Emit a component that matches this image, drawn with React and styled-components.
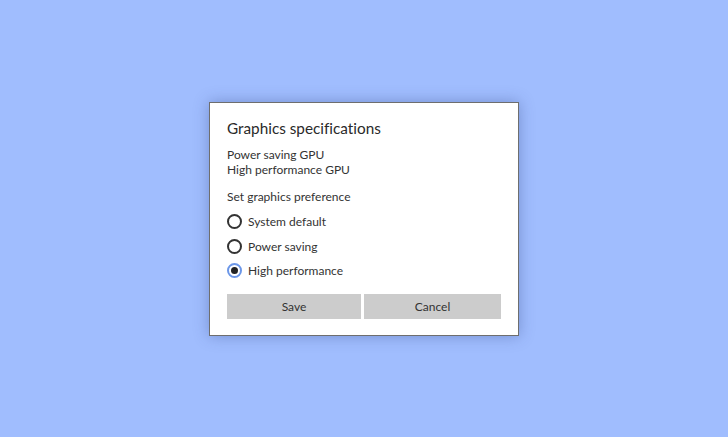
import React, { useState } from 'react';
import styled, { createGlobalStyle } from 'styled-components';

const GlobalStyle = createGlobalStyle`
  html, body {
    margin: 0;
    height: 100%;
    background: #a0bdfe;
  }
  #root {
    height: 100%;
  }
`;

const Page = styled.div`
  height: 100%;
  display: flex;
  align-items: center;
  justify-content: center;
  font-family: Lato, "Noto Sans", Arial, sans-serif;
  font-variant-ligatures: none;
  color: #333;
`;

const Dialog = styled.div`
  box-sizing: border-box;
  width: 310px;
  height: 234px;
  background: #fff;
  border: 1px solid #6e6e6e;
  box-shadow: 0 0 14px rgba(40, 60, 120, 0.35);
  padding: 15px 17px 16px 17px;
  display: flex;
  flex-direction: column;
`;

const Title = styled.h1`
  margin: 0;
  font-size: 15.3px;
  font-weight: 400;
  line-height: 20px;
  color: #2a2a2a;
`;

const InfoList = styled.div`
  margin-top: 9px;
  display: flex;
  flex-direction: column;
`;

const Text = styled.div`
  font-size: 12px;
  line-height: 15px;
  margin-top: ${p => p.$top || 0}px;
`;

const RadioGroup = styled.div`
  margin-top: 6px;
  display: flex;
  flex-direction: column;
`;

const RadioRow = styled.label`
  display: flex;
  align-items: center;
  height: 24.5px;
  font-size: 12px;
  cursor: pointer;
`;

const Circle = styled.span`
  box-sizing: border-box;
  width: 15px;
  height: 15px;
  border-radius: 50%;
  border: 2px solid ${p => (p.$checked ? '#6c97e8' : '#333')};
  display: flex;
  align-items: center;
  justify-content: center;
  margin-right: 6px;

  &::after {
    content: '';
    width: 7px;
    height: 7px;
    border-radius: 50%;
    background: #222;
    display: ${p => (p.$checked ? 'block' : 'none')};
  }
`;

const Buttons = styled.div`
  margin-top: auto;
  display: flex;
  gap: 3px;
`;

const Button = styled.button`
  flex: ${p => p.$grow || 1};
  height: 25px;
  border: none;
  background: #cccccc;
  font-family: inherit;
  font-variant-ligatures: none;
  font-size: 12px;
  color: #333;
  padding: 0;
`;

const options = ['System default', 'Power saving', 'High performance'];

export default function App() {
  const [choice, setChoice] = useState(2);
  return (
    <>
      <GlobalStyle />
      <Page>
        <Dialog>
          <Title>Graphics specifications</Title>
          <InfoList>
            <Text>Power saving GPU</Text>
            <Text>High performance GPU</Text>
            <Text $top={12}>Set graphics preference</Text>
          </InfoList>
          <RadioGroup>
            {options.map((o, i) => (
              <RadioRow key={o} onClick={() => setChoice(i)}>
                <Circle $checked={choice === i} />
                {o}
              </RadioRow>
            ))}
          </RadioGroup>
          <Buttons>
            <Button $grow={134}>Save</Button>
            <Button $grow={137}>Cancel</Button>
          </Buttons>
        </Dialog>
      </Page>
    </>
  );
}
